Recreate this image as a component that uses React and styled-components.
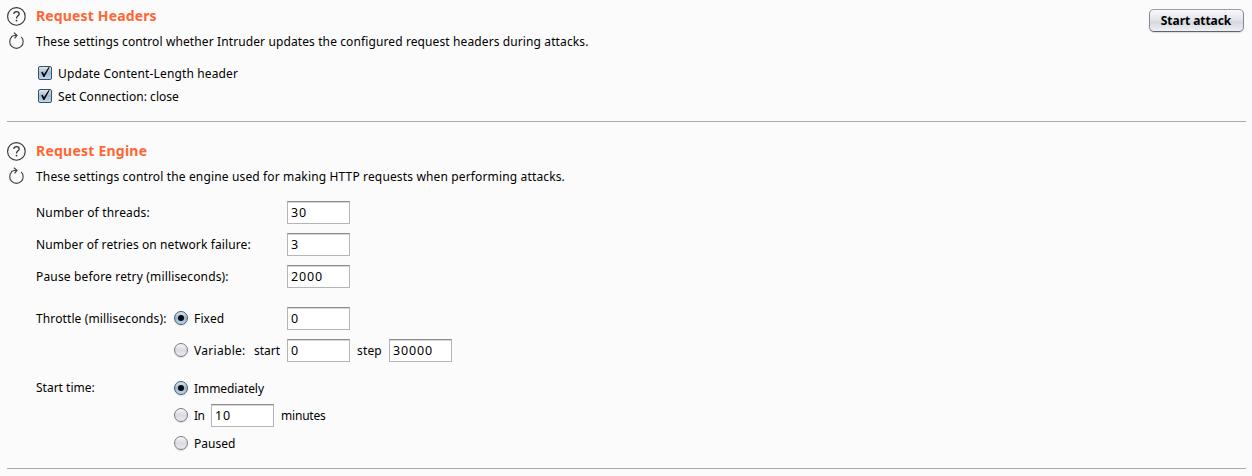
import React from "react";
import styled, { createGlobalStyle, css } from "styled-components";

const GlobalStyle = createGlobalStyle`
  *, *::before, *::after { box-sizing: border-box; }
  body {
    margin: 0;
    background: #fbfbfb;
    color: #000;
    font-family: "Noto Sans", "Open Sans", sans-serif;
    font-size: 12px;
    overflow: hidden;
  }
`;

const Page = styled.main`
  width: 1252px;
  height: 476px;
  padding: 0 6px 0 7px;
  background: #fbfbfb;
`;

const Section = styled.section`
  border-bottom: 1px solid #a8aab0;
  height: ${(p) => p.$height}px;
  padding-top: ${(p) => p.$top}px;
`;

const Header = styled.header`
  display: flex;
  align-items: flex-start;
  height: 26px;
`;

const IconSlot = styled.div`
  width: 29px;
  flex: none;
  height: 20px;
  svg { display: block; }
`;

const Title = styled.h2`
  margin: 0;
  flex: 1;
  color: #ff6633;
  font-size: 14px;
  line-height: 20px;
  font-weight: 700;
  letter-spacing: ${(p) => p.$spacing}px;
`;

const Description = styled.p`
  margin: 0;
  line-height: 20px;
  white-space: nowrap;
  letter-spacing: ${(p) => p.$spacing}px;
`;

const Text = styled.span`
  white-space: nowrap;
  letter-spacing: ${(p) => p.$spacing ?? 0}px;
`;

const AttackButton = styled.button`
  width: 95px;
  height: 23px;
  margin: 3px 2px 0 0;
  padding: 0 1px 0 0;
  border: 1px solid #85888f;
  border-top-color: #989ba1;
  border-bottom-color: #5f636c;
  border-radius: 5px;
  background: linear-gradient(#f9f9fb 0%, #e4e5ea 45%, #d6d8df 58%, #eff0f6 100%);
  box-shadow: 0 1px 1px rgba(0, 0, 0, 0.12);
  font: 700 12px/21px "Noto Sans", sans-serif;
  letter-spacing: -0.06px;
  color: #000;
`;

const CheckList = styled.div`
  display: grid;
  gap: 3px;
  padding: 12px 0 0 31px;
`;

const CheckRow = styled.label`
  display: flex;
  align-items: center;
  gap: 6px;
  height: 20px;
  line-height: 20px;
`;

const Field = styled.div`
  display: grid;
  grid-template-columns: 138px 1fr;
  align-items: center;
  height: 23px;
  line-height: 23px;
  margin: ${(p) => p.$before ?? 9}px 0 0 29px;
`;

const Row = styled.div`
  display: flex;
  align-items: center;
  height: ${(p) => p.$height ?? 23}px;
  line-height: ${(p) => p.$height ?? 23}px;
`;

const WideField = styled(Field)`
  grid-template-columns: 251px 1fr;
`;

const OptionGroup = styled(Field)`
  height: auto;
  align-items: start;
`;

const Options = styled.div`
  display: flex;
  flex-direction: column;
  gap: ${(p) => p.$gap}px;
`;

const Option = styled.label`
  display: flex;
  align-items: center;
  gap: 6px;
  width: ${(p) => (p.$width ? `${p.$width}px` : "auto")};
`;

const Caption = styled(Text)`
  padding-left: ${(p) => p.$left ?? 0}px;
  width: ${(p) => (p.$width ? `${p.$width}px` : "auto")};
`;

const Input = styled.input`
  width: 63px;
  height: 23px;
  padding: 0 3px;
  margin: 0;
  border: 1px solid #b5b5b5;
  border-top: 1px solid #8c8c8c;
  border-radius: 0;
  outline: 0;
  background: #fff;
  box-shadow: inset 0 1px 0 #d8d8d8;
  color: #000;
  font: 12.5px/21px "Noto Sans", sans-serif;
  letter-spacing: 0.85px;
`;

const Radio = styled.span`
  display: flex;
  align-items: center;
  justify-content: center;
  flex: none;
  width: 14px;
  height: 14px;
  margin-bottom: 1px;
  border-radius: 50%;
  border: 1px solid #777b82;
  background: linear-gradient(#f6f6f8, #dadbe1 50%, #e9eaef);
  box-shadow: 0 1px 1px rgba(0, 0, 0, 0.12);
  ${(p) =>
    p.$on &&
    css`
      border-color: #425b77;
      background: linear-gradient(#dce8f2, #9bb4cb 50%, #bdd6ec);
      &::after {
        content: "";
        width: 6px;
        height: 6px;
        border-radius: 50%;
        background: #07090c;
      }
    `}
`;

const Box = styled.span`
  flex: none;
  width: 14px;
  height: 14px;
  margin-bottom: 2px;
  border: 1px solid #38516d;
  border-radius: 2px;
  background: linear-gradient(#dce7f0, #a4bacf 50%, #c0d6ea);
  svg { display: block; overflow: visible; }
`;

function Check() {
  return (
    <Box>
      <svg width="12" height="12" viewBox="0 0 12 12">
        <path d="M2.2 5.3 3.7 4.8 5 7.3 9.5.3 10.7.3 5.4 10H4.3Z" fill="#000" />
      </svg>
    </Box>
  );
}

function HelpIcon() {
  return (
    <svg width="20" height="20" viewBox="0 0 20 20" fill="none" stroke="#333">
      <circle cx="9.4" cy="10.4" r="8.8" strokeWidth="1.15" />
      <path d="M6.8 7.9C6.9 6.4 8 5.6 9.5 5.6S12.2 6.5 12.2 7.9C12.2 9.8 9.5 9.9 9.5 12.4" strokeWidth="1.3" />
      <circle cx="9.5" cy="14.6" r=".9" fill="#333" stroke="none" />
    </svg>
  );
}

function ResetIcon() {
  return (
    <svg width="20" height="20" viewBox="0 0 20 20" fill="none" stroke="#444">
      <path d="M4.7 4.9A6.7 6.7 0 1 0 14.2 4.9" strokeWidth="1.15" />
      <path d="M4.2 4.7Q6.7 2.9 9.8 3.4M6.9.8 10 3.4 7.6 6.3" strokeWidth="1.2" />
    </svg>
  );
}

function Intro({ title, titleSpacing, text, textSpacing, children }) {
  return (
    <>
      <Header>
        <IconSlot><HelpIcon /></IconSlot>
        <Title $spacing={titleSpacing}>{title}</Title>
        {children}
      </Header>
      <Row $height={20}>
        <IconSlot><ResetIcon /></IconSlot>
        <Description $spacing={textSpacing}>{text}</Description>
      </Row>
    </>
  );
}

export default function App() {
  return (
    <>
      <GlobalStyle />
      <Page>
        <Section $height={122} $top={6}>
          <Intro
            title="Request Headers"
            titleSpacing={0.15}
            text="These settings control whether Intruder updates the configured request headers during attacks."
            textSpacing={0.11}
          >
            <AttackButton>Start attack</AttackButton>
          </Intro>
          <CheckList>
            <CheckRow><Check /><Text $spacing={0.14}>Update Content-Length header</Text></CheckRow>
            <CheckRow><Check /><Text $spacing={0.04}>Set Connection: close</Text></CheckRow>
          </CheckList>
        </Section>

        <Section $height={347} $top={19}>
          <Intro
            title="Request Engine"
            titleSpacing={0.23}
            text="These settings control the engine used for making HTTP requests when performing attacks."
            textSpacing={0.145}
          />
          <WideField $before={14}>
            <Text $spacing={0.17}>Number of threads:</Text>
            <Input defaultValue="30" />
          </WideField>
          <WideField>
            <Text $spacing={0.11}>Number of retries on network failure:</Text>
            <Input defaultValue="3" />
          </WideField>
          <WideField>
            <Text $spacing={0.16}>Pause before retry (milliseconds):</Text>
            <Input defaultValue="2000" />
          </WideField>

          <OptionGroup $before={19}>
            <Text $spacing={0.11}>Throttle (milliseconds):</Text>
            <Options $gap={9}>
              <Row>
                <Option $width={113}><Radio $on /><Text $spacing={0.15}>Fixed</Text></Option>
                <Input defaultValue="0" />
              </Row>
              <Row>
                <Option $width={80}><Radio /><Text $spacing={0.3}>Variable:</Text></Option>
                <Caption $width={33}>start</Caption>
                <Input defaultValue="0" />
                <Caption $left={7} $width={39} $spacing={0.15}>step</Caption>
                <Input defaultValue="30000" />
              </Row>
            </Options>
          </OptionGroup>

          <OptionGroup $before={14}>
            <Text>Start time:</Text>
            <Options $gap={3}>
              <Row $height={25}>
                <Option><Radio $on /><Text $spacing={-0.08}>Immediately</Text></Option>
              </Row>
              <Row>
                <Option $width={37}><Radio /><Text $spacing={-0.6}>In</Text></Option>
                <Input defaultValue="10" />
                <Caption $left={7} $spacing={-0.2}>minutes</Caption>
              </Row>
              <Row $height={27}>
                <Option><Radio /><Text $spacing={0}>Paused</Text></Option>
              </Row>
            </Options>
          </OptionGroup>
        </Section>
      </Page>
    </>
  );
}
